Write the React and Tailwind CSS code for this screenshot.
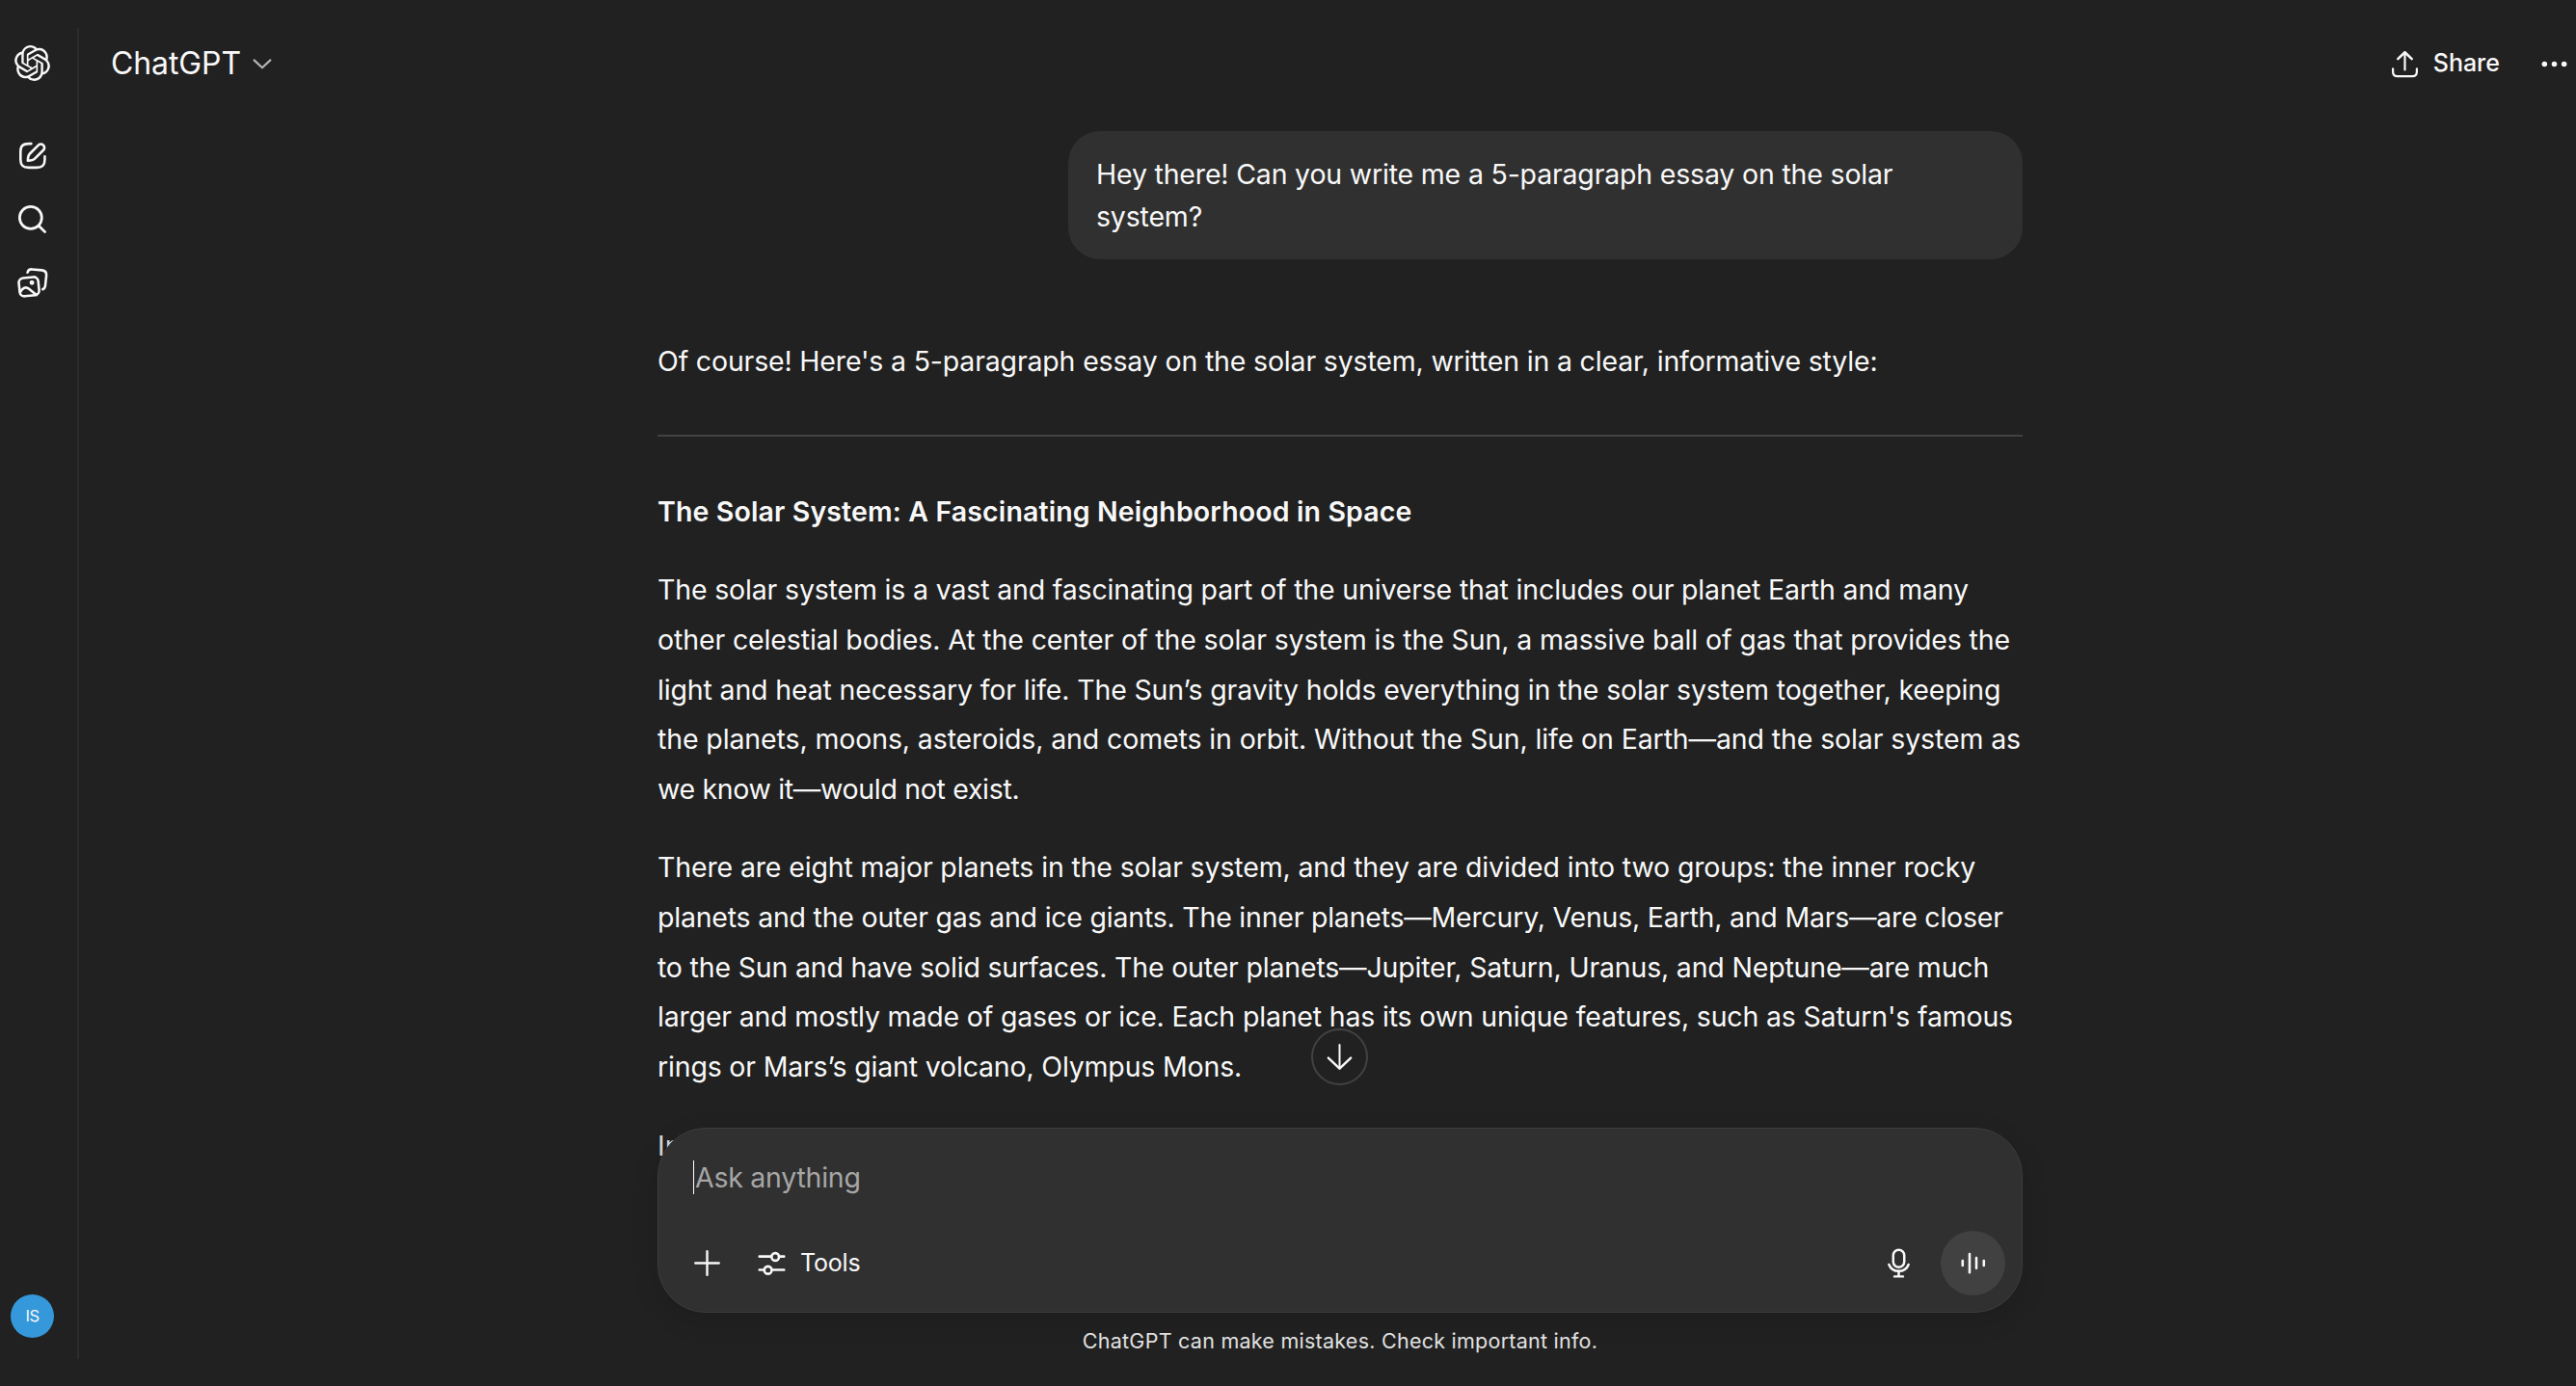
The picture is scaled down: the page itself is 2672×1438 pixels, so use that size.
import { useState } from 'react';
import { SiOpenai } from 'react-icons/si';

const intro = "Of course! Here's a 5-paragraph essay on the solar system, written in a clear, informative style:";

const essay = [
  [
    { text: 'The solar system is a vast and fascinating part of the universe that includes our planet Earth and many', spacing: 'tracking-[-0.165px]' },
    { text: 'other celestial bodies. At the center of the solar system is the Sun, a massive ball of gas that provides the', spacing: 'tracking-[-0.117px]' },
    { text: 'light and heat necessary for life. The Sun’s gravity holds everything in the solar system together, keeping', spacing: 'tracking-[-0.15px]' },
    { text: 'the planets, moons, asteroids, and comets in orbit. Without the Sun, life on Earth—and the solar system as', spacing: 'tracking-[-0.117px]' },
    { text: 'we know it—would not exist.', spacing: 'tracking-[-0.32px]' },
  ],
  [
    { text: 'There are eight major planets in the solar system, and they are divided into two groups: the inner rocky', spacing: 'tracking-[-0.144px]' },
    { text: 'planets and the outer gas and ice giants. The inner planets—Mercury, Venus, Earth, and Mars—are closer', spacing: 'tracking-[-0.22px]' },
    { text: 'to the Sun and have solid surfaces. The outer planets—Jupiter, Saturn, Uranus, and Neptune—are much', spacing: 'tracking-[-0.18px]' },
    { text: "larger and mostly made of gases or ice. Each planet has its own unique features, such as Saturn's famous", spacing: 'tracking-[-0.177px]' },
    { text: 'rings or Mars’s giant volcano, Olympus Mons.', spacing: 'tracking-[-0.18px]' },
  ],
];

function Icon({ children, className = 'size-[37px]', strokeWidth = 1.4 }) {
  return (
    <svg
      viewBox="0 0 20 20"
      fill="none"
      stroke="currentColor"
      strokeWidth={strokeWidth}
      strokeLinecap="round"
      strokeLinejoin="round"
      className={`shrink-0 ${className}`}
    >
      {children}
    </svg>
  );
}

function NewChatIcon() {
  return (
    <Icon>
      <path d="M9.4 3.3H8C4.7 3.3 3.4 4.5 3.4 7.8V12.2C3.4 15.4 4.7 16.7 8 16.7H12.4C15.7 16.7 17 15.4 17 12.2V10.4" />
      <path d="M13.4 4.1L8.6 8.9C7.7 9.8 7.5 11 7.5 12.8C9.3 12.8 10.5 12.6 11.4 11.7L16.2 6.9C17 6.1 17 4.9 16.2 4.1C15.4 3.3 14.2 3.3 13.4 4.1Z" />
    </Icon>
  );
}

function SearchIcon() {
  return (
    <Icon strokeWidth={1.5}>
      <circle cx="9.1" cy="9.1" r="6.2" />
      <path d="M13.6 13.6L17.1 17.1" />
    </Icon>
  );
}

function LibraryIcon() {
  return (
    <Icon>
      <rect x="2.7" y="7" width="10.9" height="10.2" rx="2.6" transform="rotate(-6 8.1 12.1)" />
      <path d="M3.2 15.2C4.6 12.9 6.3 11.9 8 13.3L12.3 16.8" />
      <circle cx="9.8" cy="9.8" r="0.65" fill="currentColor" />
      <path d="M7.3 4.2C7.6 3 8.4 2.3 9.8 2.4L15.5 2.9C17.3 3.1 18 4.2 17.9 5.8L17.3 11.4C17.2 12.6 16.7 13.3 15.8 13.6" />
    </Icon>
  );
}

function ShareIcon() {
  return (
    <Icon strokeWidth={1.2}>
      <path d="M10 13.2V3.6" />
      <path d="M6.1 7.1L10 3.4L13.9 7.1" strokeWidth="1.4" />
      <path d="M3.3 12.6V14.3C3.3 16 4 16.8 5.8 16.8H14.2C16 16.8 16.7 16 16.7 14.3V12.6" />
    </Icon>
  );
}

function ToolsIcon() {
  return (
    <Icon strokeWidth={1.4}>
      <path d="M3.1 6.3H9.8M14 6.3H16.9" />
      <circle cx="12" cy="6.5" r="2.1" />
      <path d="M3.1 13.8H5.9M10.1 13.8H16.9" />
      <circle cx="7.9" cy="13.9" r="2.1" />
    </Icon>
  );
}

function MicIcon() {
  return (
    <Icon strokeWidth={1.35}>
      <rect x="6.9" y="2.6" width="6.2" height="9.7" rx="3.1" />
      <path d="M4.5 10.8C5.4 13.1 7.4 14.5 10 14.5C12.6 14.5 14.6 13.1 15.5 10.8" />
      <path d="M10 14.5V17.3M7.6 17.5H12.4" />
    </Icon>
  );
}

function VoiceIcon() {
  return (
    <Icon strokeWidth={1.4}>
      <path d="M4.2 8.7V11.3M8.1 4.9V15.3M11.9 7.1V12.9M16.1 8.7V11.3" />
    </Icon>
  );
}

function Sidebar() {
  return (
    <aside className="flex w-[82px] shrink-0 pt-[29px] pb-7">
      <div className="flex grow flex-col items-center border-r-2 border-[#2c2c2c] pr-[13px] pt-[18px] pb-[22px]">
        <SiOpenai className="size-[37px]" />
        <div className="mt-[59px] flex flex-col gap-[29px]">
          <NewChatIcon />
          <SearchIcon />
          <LibraryIcon />
        </div>
        <div className="mt-auto flex size-[45px] items-center justify-center rounded-full bg-[#3498db] text-[16.5px] tracking-[-0.4px]">
          IS
        </div>
      </div>
    </aside>
  );
}

function Header() {
  return (
    <header className="flex h-[132px] shrink-0 items-center justify-between pl-[33px] pr-1">
      <button className="flex items-center gap-[10px] text-[32px] tracking-[-0.1px]">
        ChatGPT
        <Icon className="size-[24px] text-[#b4b4b4]" strokeWidth={1.8}>
          <path d="M3 7L10 13.6L17 7" />
        </Icon>
      </button>
      <div className="flex items-center">
        <button className="flex items-center gap-[11px] text-[25px] font-medium">
          <ShareIcon />
          Share
        </button>
        <button className="ml-[38px]">
          <Icon strokeWidth={0}>
            <g fill="currentColor">
              <circle cx="4.5" cy="10" r="1.5" />
              <circle cx="10" cy="10" r="1.5" />
              <circle cx="15.5" cy="10" r="1.5" />
            </g>
          </Icon>
        </button>
      </div>
    </header>
  );
}

function Thread() {
  return (
    <div className="mx-auto flex w-[1416px] flex-col pt-1 text-[28.5px]">
      <div className="w-[990px] self-end rounded-[33px] bg-[#303030] px-[29px] pt-[22.5px] pb-[22px] leading-[44.3px] tracking-[-0.18px]">
        <p>
          Hey there! Can you write me a 5-paragraph essay on the solar
          <br />
          system?
        </p>
      </div>
      <div className="pt-[80px] leading-[51.67px]">
        <p className="tracking-[-0.167px]">{intro}</p>
        <hr className="mt-[50px] mb-[52px] border-t-2 border-[#424242]" />
        <h3 className="mb-[29.8px] font-semibold tracking-[0.126px]">
          The Solar System: A Fascinating Neighborhood in Space
        </h3>
        {essay.map((lines, i) => (
          <p key={i} className="mb-[29.8px] whitespace-nowrap">
            {lines.map((line) => (
              <span key={line.text} className={`block ${line.spacing}`}>
                {line.text}
              </span>
            ))}
          </p>
        ))}
        <p className="text-[#d8d8d8]">In</p>
      </div>
    </div>
  );
}

function Composer() {
  const [message, setMessage] = useState('');

  return (
    <div className="absolute inset-x-0 bottom-0 flex flex-col items-center pl-[26px]">
      <button className="mr-px mb-11 flex size-[59px] items-center justify-center rounded-full border-2 border-[#424242] bg-[#212121]">
        <Icon strokeWidth={1.3}>
          <path d="M10 3.3V16.5" strokeWidth="1.1" />
          <path d="M3.7 10.6L10 16.6L16.3 10.6" />
        </Icon>
      </button>
      <div className="flex h-[192px] w-[1416px] flex-col justify-between rounded-[50px] border border-[#3c3c3c] bg-[#303030] pt-7 pr-[17px] pb-[17px] pl-9 shadow-[0_8px_28px_rgba(0,0,0,0.12)]">
        <div className="flex items-center">
          <span className="h-[35px] w-px bg-white" />
          <input
            value={message}
            onChange={(e) => setMessage(e.target.value)}
            placeholder="Ask anything"
            className="h-[44px] grow bg-transparent pl-px text-[28.5px] tracking-[-0.25px] outline-none placeholder:text-[#a6a6a6]"
          />
        </div>
        <div className="flex items-center">
          <button className="-ml-1">
            <Icon strokeWidth={1.3}>
              <path d="M10 3.4V16.6M3.4 10H16.6" />
            </Icon>
          </button>
          <button className="ml-[30px] flex items-center gap-[11px] text-[25px] tracking-[-0.2px]">
            <ToolsIcon />
            Tools
          </button>
          <button className="ml-auto">
            <MicIcon />
          </button>
          <button className="ml-[25px] flex size-[67px] items-center justify-center rounded-full bg-[#414141]">
            <VoiceIcon />
          </button>
        </div>
      </div>
      <p className="flex h-[76px] items-start pt-[13px] text-[21.5px] leading-[32px] tracking-[0.25px] text-[#e0e0e0]">
        ChatGPT can make mistakes. Check important info.
      </p>
    </div>
  );
}

export default function App() {
  return (
    <div className="flex h-[1438px] w-[2672px] overflow-hidden bg-[#212121] font-['Inter',sans-serif] text-[#f8f8f8]">
      <Sidebar />
      <main className="relative flex grow flex-col">
        <Header />
        <div className="grow overflow-hidden pl-[26px]">
          <Thread />
        </div>
        <Composer />
      </main>
    </div>
  );
}
